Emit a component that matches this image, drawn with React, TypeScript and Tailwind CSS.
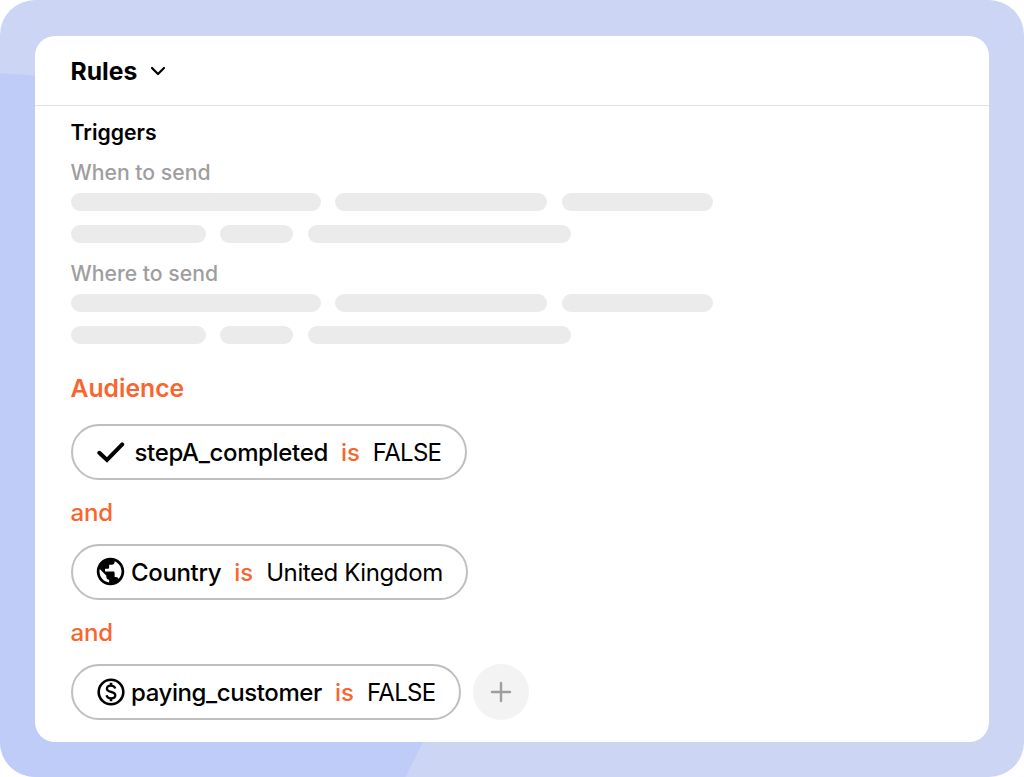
import { MdPublic } from "react-icons/md";
import type { ReactNode } from "react";

const skeletonRows = [
  ["w-[250px]", "w-[212px]", "w-[151px]"],
  ["w-[135px]", "w-[73px]", "w-[263px]"],
];

const CheckIcon = () => (
  <svg viewBox="0 0 28 28" className="size-7" fill="none">
    <path
      d="M2.3 14.8L10 22L25.2 6.4"
      stroke="black"
      strokeWidth="4"
      strokeLinecap="round"
    />
  </svg>
);

const DollarIcon = () => (
  <svg viewBox="0 0 28 28" className="size-7" fill="none" stroke="black">
    <circle cx="14" cy="14" r="12.3" strokeWidth="2.6" />
    <path
      d="M18.2 10.5C17.6 8.5 16 7.6 14 7.6C11.6 7.6 9.9 8.8 9.9 10.7C9.9 15 18.3 12.8 18.3 17.3C18.3 19.3 16.5 20.4 14.1 20.4C11.8 20.4 10.1 19.4 9.5 17.3"
      strokeWidth="2.3"
    />
    <path d="M14 4.8V8M14 20V23.2" strokeWidth="2.6" />
  </svg>
);

const Skeleton = () => (
  <div className="flex flex-col gap-[14px]">
    {skeletonRows.map((row, i) => (
      <div key={i} className="flex gap-[14.500px]">
        {row.map((width) => (
          <div key={width} className={`h-[18px] rounded-full bg-[#ebebeb] ${width}`} />
        ))}
      </div>
    ))}
  </div>
);

type RuleProps = {
  icon: ReactNode;
  name: string;
  value: string;
  className: string;
  nameClassName: string;
  valueClassName: string;
};

const Rule = ({ icon, name, value, className, nameClassName, valueClassName }: RuleProps) => (
  <div
    className={`flex h-14 items-center whitespace-nowrap rounded-full border-2 border-[#bfbfbf] pl-6 text-2xl ${className}`}
  >
    {icon}
    <span className={`mt-[2px] font-medium ${nameClassName}`}>{name}</span>
    <span className="ml-[13px] mt-[2px] font-medium text-[#f9652f]">is</span>
    <span className={`ml-[13px] mt-[2px] ${valueClassName}`}>{value}</span>
  </div>
);

const And = () => (
  <div className="flex h-16 items-center pt-[2px] text-2xl font-medium tracking-[-0.2px] text-[#f9652f]">
    and
  </div>
);

export default function App() {
  return (
    <div className="relative h-[777px] w-[1024px] overflow-hidden rounded-[35px] bg-[#ccd5f4] p-[35px] pt-[35.5px] font-[Inter,sans-serif] text-black">
      <svg className="absolute inset-0" width="1024" height="777" fill="#c0ccf8">
        <path d="M0 73.5C140 76 420 170 530 340C560 470 480 630 405.500 777H0Z" />
      </svg>
      <div className="relative flex h-[706px] w-[954px] flex-col rounded-[20px] bg-white">
        <div className="flex h-[70px] shrink-0 items-center border-b border-[#e2e2e2] pl-[35.5px]">
          <h1 className="mt-[3px] text-[24.700px] font-bold">Rules</h1>
          <svg viewBox="0 0 16 10" className="ml-[13px] mt-[2px] h-[10px] w-4" fill="none">
            <path
              d="M2 2L8 8L14 2"
              stroke="black"
              strokeWidth="2.2"
              strokeLinecap="round"
              strokeLinejoin="round"
            />
          </svg>
        </div>
        <div className="flex flex-col pl-[35.5px] pt-[10px]">
          <h2 className="text-[21.200px] font-semibold leading-8">Triggers</h2>
          <p className="mt-2 text-[21.200px] font-medium leading-8 text-[#9e9e9e]">When to send</p>
          <div className="mt-[5px]">
            <Skeleton />
          </div>
          <p className="mt-[14px] text-[21.200px] font-medium leading-8 text-[#9e9e9e]">
            Where to send
          </p>
          <div className="mt-[5px]">
            <Skeleton />
          </div>
          <h2 className="mt-7 text-[24.700px] font-semibold leading-8 text-[#f9652f]">Audience</h2>
          <div className="mt-5">
            <Rule
              icon={<CheckIcon />}
              name="stepA_completed"
              value="FALSE"
              className="w-[396px]"
              nameClassName="ml-[10px] tracking-[-0.35px]"
              valueClassName="tracking-[-0.7px]"
            />
            <And />
            <Rule
              icon={<MdPublic className="-m-[2.5px] size-[33px]" />}
              name="Country"
              value="United Kingdom"
              className="w-[397px]"
              nameClassName="ml-[6.5px] tracking-[-0.35px]"
              valueClassName="tracking-[-0.4px]"
            />
            <And />
            <div className="flex gap-[12.5px]">
              <Rule
                icon={<DollarIcon />}
                name="paying_customer"
                value="FALSE"
                className="w-[390px]"
                nameClassName="ml-[6.5px] tracking-[-0.4px]"
                valueClassName="tracking-[-0.65px]"
              />
              <div className="flex size-14 items-center justify-center rounded-full bg-[#f3f3f3]">
                <svg viewBox="0 0 22 22" className="mt-px size-[22px]" fill="none">
                  <path
                    d="M11 2V20M2 11H20"
                    stroke="#9e9e9e"
                    strokeWidth="2.4"
                    strokeLinecap="round"
                  />
                </svg>
              </div>
            </div>
          </div>
        </div>
      </div>
    </div>
  );
}
